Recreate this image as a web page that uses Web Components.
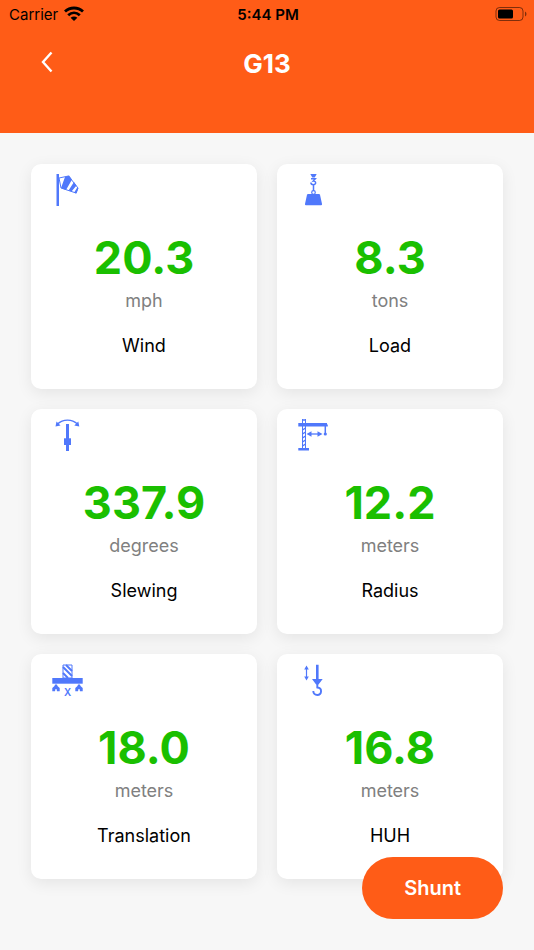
<!DOCTYPE html>
<html lang="en">
<head>
<meta charset="utf-8">
<meta name="viewport" content="width=device-width, initial-scale=1">
<title>G13</title>
<style>
  body {
    margin: 0;
    min-height: 100vh;
    background: #f7f7f7;
    color: #000;
    font-family: Inter, "Liberation Sans", sans-serif;
  }
</style>
</head>
<body>
<crane-dashboard>
  <app-header heading="G13">
    <status-bar slot="status" carrier="Carrier" time="5:44 PM"></status-bar>
  </app-header>
  <metric-card icon="wind" value="20.3" unit="mph" label="Wind"></metric-card>
  <metric-card icon="load" value="8.3" unit="tons" label="Load"></metric-card>
  <metric-card icon="slewing" value="337.9" unit="degrees" label="Slewing"></metric-card>
  <metric-card icon="radius" value="12.2" unit="meters" label="Radius"></metric-card>
  <metric-card icon="translation" value="18.0" unit="meters" label="Translation"></metric-card>
  <metric-card icon="huh" value="16.8" unit="meters" label="HUH"></metric-card>
  <action-button slot="action">Shunt</action-button>
</crane-dashboard>

<script>
const icons = {
  wind: `
    <path d="M5.500 0h2.500v32H5.500z"/>
    <path d="M8 4l9.500-2L27 14l-2 5-15-5z" fill="none" stroke="currentColor" stroke-width="1"/>
    <path d="M14 3l4-1.500 3 4L15 16l-5-2zM23 8l2.500 3.500L20.500 17.500 17.500 16.500zM26.500 13l.8 1.500L25.500 19.500l-2.500-.8z"/>`,
  load: `
    <path d="M13.300 0h6.400l-2 3.500h-2.400z"/>
    <path d="M14 4.700h4.300L16.300 7c2.800-.3 3.400 3.700 0 3.700-1.600 0-2.400-.8-2.400-2.200M16.500 10v7" fill="none" stroke="currentColor" stroke-width="1.500"/>
    <circle cx="16.500" cy="18.500" r="1.800" fill="none" stroke="currentColor" stroke-width="1.200"/>
    <path d="M11 20h11q.8 0 1 .8L25 30q.2 1.300-1 1.300H9Q7.800 31.300 8 30l2-9.200q.2-.8 1-.8z"/>`,
  slewing: `
    <path d="M6.500 5C12-.3 21-.3 26.500 5" fill="none" stroke="currentColor" stroke-width="1.300"/>
    <path d="M4.500 7.500l1-5 4 4zM28.300 7.500l-1-5-4 4z"/>
    <path d="M15 5h3v27h-3z"/><path d="M13 19.300h7V26h-7z"/>`,
  radius: `
    <path d="M1.300 4h28.700v1.500h.8v2H1.300zM1.300 29h10.700v2.500H1.300z"/>
    <path d="M5.500 0v30M8.500 0v30" stroke="currentColor"/>
    <path d="M5.500 1h3M5.500 11l3-2M5.500 15l3-2M5.500 19l3-2M5.500 23l3-2M5.500 27l3-2M28.300 7v7" fill="none" stroke="currentColor" stroke-width="1.500"/>
    <path d="M13 15h9" stroke="currentColor" stroke-width="1.300"/>
    <path d="M9.500 15l5-2.700v5.400zM25.500 15l-5-2.700v5.400z"/><circle cx="28.300" cy="15" r="1.600"/>`,
  translation: `
    <path d="M12 1h9v13h-9z" fill="none" stroke="currentColor"/>
    <path d="M12 3l9 9M15 1l6 6M12 9l5 5" stroke="currentColor" stroke-width="1.900"/>
    <path d="M1.300 14h30.400v5.700H1.300z"/>
    <path d="M4 20.500h2l.5 1.500 2.200 2v3.300H6L5.500 25h-1L4 27.300H1.300V24l2.200-2zM27 20.500h2l.5 1.500 2.200 2v3.300H29l-.5-2.300h-1l-.5 2.300h-2.700V24l2.200-2z"/>
    <text x="16.500" y="32" text-anchor="middle" font-size="10" font-weight="600">X</text>`,
  huh: `
    <path d="M9.500 4v10" stroke="currentColor" stroke-width="1.200"/>
    <path d="M9.500 1.500l2.300 4H7.200zM9.500 16.500l2.300-4H7.200z"/>
    <path d="M19 .7h2.600V15H19zM15 15h10.700l-4.200 5.500h-2.400z"/>
    <path d="M20.300 20v3.500c5.500.5 4.500 7.500 0 7.500-2.500 0-4-1.500-4-4" fill="none" stroke="currentColor" stroke-width="1.900"/>`
};

class StatusBar extends HTMLElement {
  connectedCallback() {
    this.attachShadow({ mode: 'open' });
    this.shadowRoot.innerHTML = `
      <style>
        :host {
          display: grid;
          grid-template-columns: 1fr auto 1fr;
          align-items: center;
          height: 28px;
          padding: 0 7px 0 9px;
          font-size: 15px;
          color: #000;
        }
        .network {
          display: flex;
          align-items: center;
          gap: 6px;
        }
        .time { font-weight: 600; }
        .battery { justify-self: end; }
        svg { display: block; }
      </style>
      <div class="network">
        <span>${this.getAttribute('carrier')}</span>
        <svg width="20" height="16" viewBox="0 0 20 16" aria-hidden="true">
          <g fill="none" stroke="currentColor" stroke-width="2.800">
            <path d="M1 5.500c5-4.700 13-4.700 18 0"/>
            <path d="M4.200 9.200c3.500-3.200 8.100-3.200 11.600 0"/>
          </g>
          <path d="M6.600 11.700c2-1.700 4.800-1.700 6.800 0L10 15z"/>
        </svg>
      </div>
      <span class="time">${this.getAttribute('time')}</span>
      <svg class="battery" width="32" height="16" viewBox="0 0 32 16" aria-hidden="true">
        <rect x="1" y="1.500" width="27" height="13" rx="3.500" fill="none" stroke="currentColor" opacity=".5"/>
        <rect x="3" y="3.500" width="15" height="9" rx="1.500"/>
        <path d="M30 5.500c2 1 2 4 0 5z" opacity=".5"/>
      </svg>
    `;
  }
}

class AppHeader extends HTMLElement {
  connectedCallback() {
    this.attachShadow({ mode: 'open' });
    this.shadowRoot.innerHTML = `
      <style>
        :host {
          display: block;
          background: #ff5c17;
          color: white;
          padding-bottom: 33px;
        }
        nav {
          display: grid;
          grid-template-columns: 1fr auto 1fr;
          align-items: center;
          height: 72px;
          padding: 0 31px;
        }
        button {
          display: grid;
          place-items: center;
          justify-self: start;
          width: 32px;
          height: 40px;
          padding: 0 0 4px;
          border: 0;
          background: none;
          color: inherit;
        }
        h1 {
          margin: 0;
          font-size: 26px;
          line-height: 32px;
          font-weight: 700;
        }
      </style>
      <slot name="status"></slot>
      <nav>
        <button type="button" aria-label="Back">
          <svg width="12" height="22" viewBox="0 0 12 22" fill="none" stroke="currentColor" stroke-width="2.400">
            <path d="M10.500 1.500L2 11l8.500 9.500"/>
          </svg>
        </button>
        <h1>${this.getAttribute('heading')}</h1>
      </nav>
    `;
  }
}

class MetricCard extends HTMLElement {
  connectedCallback() {
    this.attachShadow({ mode: 'open' });
    this.shadowRoot.innerHTML = `
      <style>
        :host {
          display: flex;
          flex-direction: column;
          box-sizing: border-box;
          padding: 10px 20px 31px;
          border-radius: 10px;
          background: white;
          box-shadow: 0 4px 16px rgba(0, 0, 0, 0.08);
          text-align: center;
        }
        svg {
          width: 32px;
          height: 32px;
          overflow: visible;
          color: #5078fb;
          fill: currentColor;
        }
        .value {
          margin-top: 24px;
          font-size: 45px;
          line-height: 56px;
          font-weight: 700;
          color: #1abf00;
        }
        .unit {
          margin-top: 3px;
          font-size: 18px;
          line-height: 24px;
          color: #808080;
        }
        .label {
          margin: 21px 0 0;
          font-size: 18px;
          line-height: 24px;
          font-weight: 400;
        }
      </style>
      <svg viewBox="0 0 32 32" aria-hidden="true">${icons[this.getAttribute('icon')]}</svg>
      <div class="value">${this.getAttribute('value')}</div>
      <div class="unit">${this.getAttribute('unit')}</div>
      <h2 class="label">${this.getAttribute('label')}</h2>
    `;
  }
}

class ActionButton extends HTMLElement {
  connectedCallback() {
    this.attachShadow({ mode: 'open' });
    this.shadowRoot.innerHTML = `
      <style>
        :host {
          display: block;
          position: fixed;
          right: 31px;
          bottom: 31px;
        }
        button {
          padding: 19px 42px;
          border: 0;
          border-radius: 31px;
          background: #ff5c17;
          color: white;
          font: 600 20px/24px Inter, "Liberation Sans", sans-serif;
        }
      </style>
      <button type="button"><slot></slot></button>
    `;
  }
}

class CraneDashboard extends HTMLElement {
  connectedCallback() {
    this.attachShadow({ mode: 'open' });
    this.shadowRoot.innerHTML = `
      <style>
        :host { display: block; }
        main {
          display: grid;
          grid-template-columns: 1fr 1fr;
          gap: 20px;
          padding: 31px;
        }
      </style>
      <slot name="header"></slot>
      <main><slot></slot></main>
      <slot name="action"></slot>
    `;
    this.querySelector('app-header').slot = 'header';
  }
}

customElements.define('status-bar', StatusBar);
customElements.define('app-header', AppHeader);
customElements.define('metric-card', MetricCard);
customElements.define('action-button', ActionButton);
customElements.define('crane-dashboard', CraneDashboard);
</script>
</body>
</html>
